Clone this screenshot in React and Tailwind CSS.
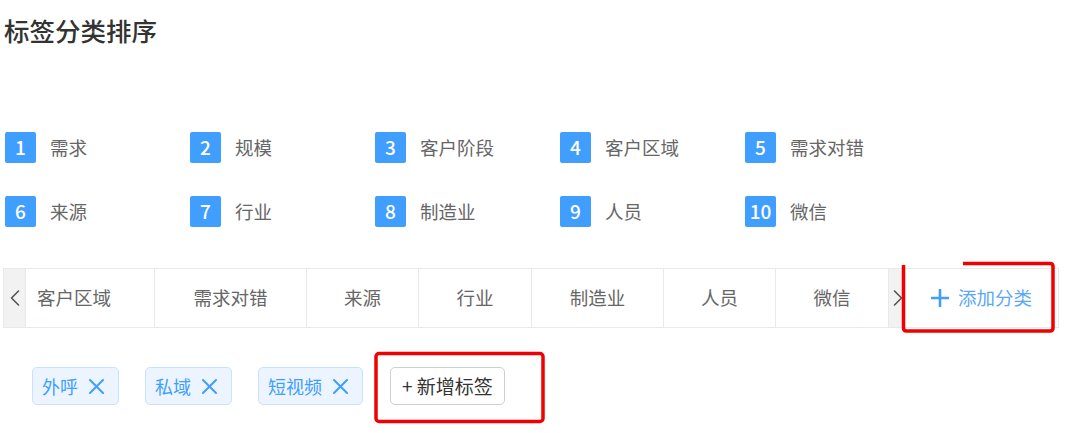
import { ChevronLeft, ChevronRight } from 'lucide-react'

const CATEGORIES = ['需求', '规模', '客户阶段', '客户区域', '需求对错', '来源', '行业', '制造业', '人员', '微信']

const TABS = [
  { label: '客户区域', w: 'w-[129px]', first: true },
  { label: '需求对错', w: 'w-[152px]' },
  { label: '来源', w: 'w-[112px]' },
  { label: '行业', w: 'w-[113px]' },
  { label: '制造业', w: 'w-[132px]' },
  { label: '人员', w: 'w-[112px]' },
  { label: '微信', w: 'w-[113px]' },
]

const TAGS = ['外呼', '私域', '短视频']

function CloseIcon() {
  return (
    <svg width="15" height="15" viewBox="0 0 15 15" className="shrink-0">
      <path d="M1 1 L14 14 M14 1 L1 14" stroke="currentColor" strokeWidth="2" strokeLinecap="round" />
    </svg>
  )
}

function PlusIcon() {
  return (
    <svg width="20" height="20" viewBox="0 0 20 20" className="shrink-0">
      <path d="M10 1 V19 M1 10 H19" stroke="currentColor" strokeWidth="2.6" />
    </svg>
  )
}

function Annotations() {
  // red marker boxes drawn over the screenshot
  return (
    <svg className="absolute inset-0 pointer-events-none" width="1080" height="433">
      <path
        d="M963 263.5 H1050 Q1053 263.5 1053 266.5 V328 Q1053 331 1050 331 H906.5 Q903.5 331 903.5 328 V265"
        fill="none"
        stroke="#f00000"
        strokeWidth="3.5"
      />
      <rect x="376" y="353.5" width="167" height="68" rx="3" fill="none" stroke="#f00000" strokeWidth="3.5" />
    </svg>
  )
}

export default function App() {
  return (
    <div
      className="relative w-[1080px] h-[433px] bg-white overflow-hidden"
      style={{ fontFamily: '"Noto Sans CJK SC", "Noto Sans", sans-serif' }}
    >
      <h1 className="pt-[13px] pl-[4px] text-[25.5px] leading-[34px] font-medium text-[#333]">标签分类排序</h1>

      {/* numbered order grid */}
      <div className="mt-[85px] pl-[5px] grid grid-cols-[repeat(5,185px)] gap-y-[33px]">
        {CATEGORIES.map((name, i) => (
          <div key={name} className="flex items-center h-[31px]">
            <span className="w-[31px] h-[31px] rounded-[2px] bg-[#409eff] text-white flex items-center justify-center text-[19px] font-medium">
              {i + 1}
            </span>
            <span className="ml-[14px] text-[18.5px] text-[#666]">{name}</span>
          </div>
        ))}
      </div>

      {/* category tab strip */}
      <div className="mt-[41px] ml-[3px] w-[1056px] h-[60px] border border-[#e9e9e9] flex">
        <div className="w-[21px] bg-[#f2f2f2] flex items-center justify-center text-[#555]">
          <ChevronLeft size={28} strokeWidth={1.4} className="shrink-0" />
        </div>
        {TABS.map((t) => (
          <div
            key={t.label}
            className={`${t.w} border-l border-[#e9e9e9] flex items-center text-[18.5px] text-[#666] ${
              t.first ? 'pl-[11px]' : 'justify-center'
            }`}
          >
            {t.label}
          </div>
        ))}
        <div className="w-[17px] border-l border-[#e9e9e9] bg-[#f2f2f2] flex items-center overflow-hidden text-[#555]">
          <ChevronRight size={28} strokeWidth={1.4} className="shrink-0 -ml-[5px]" />
        </div>
        <div className="flex-1 flex items-center pl-[25px] gap-[8px] text-[#409eff]">
          <PlusIcon />
          <span className="text-[18.5px] text-[#5aa8f5]">添加分类</span>
        </div>
      </div>

      {/* tags */}
      <div className="mt-[39px] pl-[32px] flex items-center gap-[26px]">
        {TAGS.map((tag) => (
          <span
            key={tag}
            className="h-[38px] pl-[9px] pr-[14px] flex items-center gap-[11px] rounded-[5px] border border-[#c6e2ff] bg-[#ecf5ff] text-[#409eff] text-[18px]"
          >
            {tag}
            <CloseIcon />
          </span>
        ))}
        <button className="h-[38px] ml-[1px] px-[11px] flex items-center rounded-[5px] border-[1.5px] border-[#cfcfcf] bg-white text-[#333] text-[19px]">
          + 新增标签
        </button>
      </div>

      <Annotations />
    </div>
  )
}
